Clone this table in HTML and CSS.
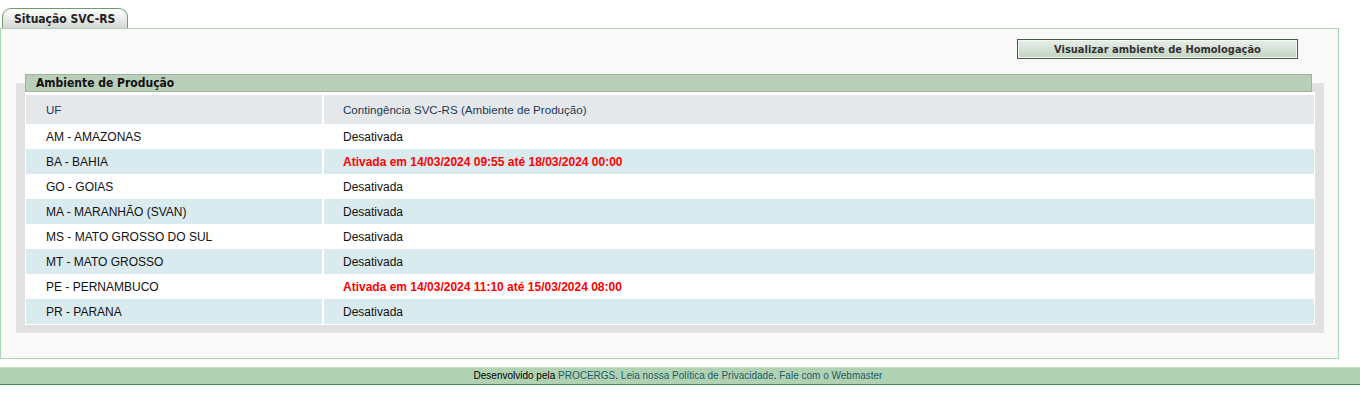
FILE: index.html
```html
<!DOCTYPE html>
<html lang="pt-BR">
<head>
<meta charset="utf-8">
<title>Situação SVC-RS</title>
<link rel="stylesheet" href="styles.css">
</head>
<body>
<div class="tabs"><span class="tab">Situação SVC-RS</span></div>
<div class="panel">
  <div class="toolbar"><button class="btn" type="button">Visualizar ambiente de Homologação</button></div>
  <div class="box">
    <div class="box-title">Ambiente de Produção</div>
    <div class="table-wrap">
      <table class="grid">
        <thead>
          <tr><th class="c1">UF</th><th class="c2">Contingência SVC-RS (Ambiente de Produção)</th></tr>
        </thead>
        <tbody>
          <tr><td class="c1">AM - AMAZONAS</td><td class="c2">Desativada</td></tr>
          <tr class="alt"><td class="c1">BA - BAHIA</td><td class="c2 on">Ativada em 14/03/2024 09:55 até 18/03/2024 00:00</td></tr>
          <tr><td class="c1">GO - GOIAS</td><td class="c2">Desativada</td></tr>
          <tr class="alt"><td class="c1">MA - MARANHÃO (SVAN)</td><td class="c2">Desativada</td></tr>
          <tr><td class="c1">MS - MATO GROSSO DO SUL</td><td class="c2">Desativada</td></tr>
          <tr class="alt"><td class="c1">MT - MATO GROSSO</td><td class="c2">Desativada</td></tr>
          <tr><td class="c1">PE - PERNAMBUCO</td><td class="c2 on">Ativada em 14/03/2024 11:10 até 15/03/2024 08:00</td></tr>
          <tr class="alt"><td class="c1">PR - PARANA</td><td class="c2">Desativada</td></tr>
        </tbody>
      </table>
    </div>
  </div>
</div>
<div class="footer">Desenvolvido pela <a href="#">PROCERGS</a>. <a href="#">Leia nossa Política de Privacidade</a>. <a href="#">Fale com o Webmaster</a></div>
</body>
</html>
```
FILE: styles.css
```css
html, body { margin: 0; padding: 0; background: #fff; }
body { font-family: "Liberation Sans", Arial, sans-serif; font-size: 12px; color: #000; }

.tabs { padding: 8px 0 0 2px; height: 20px; display: flex; }
.tab {
  display: block; height: 19px; line-height: 20px;
  padding: 0 12px 0 11px;
  border: 1px solid #6c9c6c; border-bottom: 0;
  border-radius: 9px 9px 0 0;
  background: linear-gradient(#ffffff, #d6d6d6);
  font-family: "DejaVu Sans", Verdana, sans-serif; font-stretch: condensed;
  font-weight: bold; font-size: 12px; color: #222;
}

.panel {
  width: 1339px; box-sizing: border-box;
  border: 1px solid #a6d6b6; background: #f9f9f9;
  padding: 10px 0 25px 0;
}
.toolbar { display: flex; justify-content: flex-end; padding-right: 40px; }
.btn {
  width: 281px; height: 20px; margin: 0; padding: 0;
  border: 1px solid #3e5e3e;
  box-shadow: inset 0 0 0 1px #f4f7f4;
  background: linear-gradient(#e9eee9, #c3d3c3);
  font-family: "DejaVu Sans", Verdana, sans-serif; font-stretch: condensed;
  font-weight: bold; font-size: 11px; color: #333;
}

.box {
  margin: 24px 14px 0 15px;
  background: #e1e1e1;
  padding: 0 9px 8px 9px;
}
.box-title {
  position: relative; top: -9px; margin-bottom: -9px;
  margin-right: 3px;
  height: 16px; line-height: 17px;
  border: 1px solid #9db59d; background: #b9cfb9;
  padding-left: 10px;
  font-family: "DejaVu Sans", Verdana, sans-serif; font-stretch: condensed;
  font-weight: bold; font-size: 12px; color: #111;
}
.table-wrap { background: #fff; padding: 3px 1px 1px 1px; }
.grid { width: 100%; border-collapse: collapse; border-spacing: 0; }
.grid th, .grid td { padding: 0 0 0 20px; text-align: left; white-space: nowrap; }
.grid th {
  height: 29px; background: #e4e8eb;
  font-weight: normal; font-size: 11.6px; color: #1c3854;
}
.grid td { height: 25px; font-size: 12px; color: #111; }
.grid .c1 { width: 276px; }
.grid .c2 { border-left: 2px solid #fff; padding-left: 19px; }
.grid tr.alt td { background: #daebef; }
.grid td.on { color: #f00; font-weight: bold; }

.footer {
  margin-top: 8px;
  height: 16px; line-height: 16px;
  border-top: 1px solid #c5dfc5; border-bottom: 1px solid #4e8b5e;
  background: #b1d2b2;
  text-align: center; font-size: 10px; color: #000;
  padding-right: 4px;
}
.footer a { color: #1c5c6c; text-decoration: none; }
```
